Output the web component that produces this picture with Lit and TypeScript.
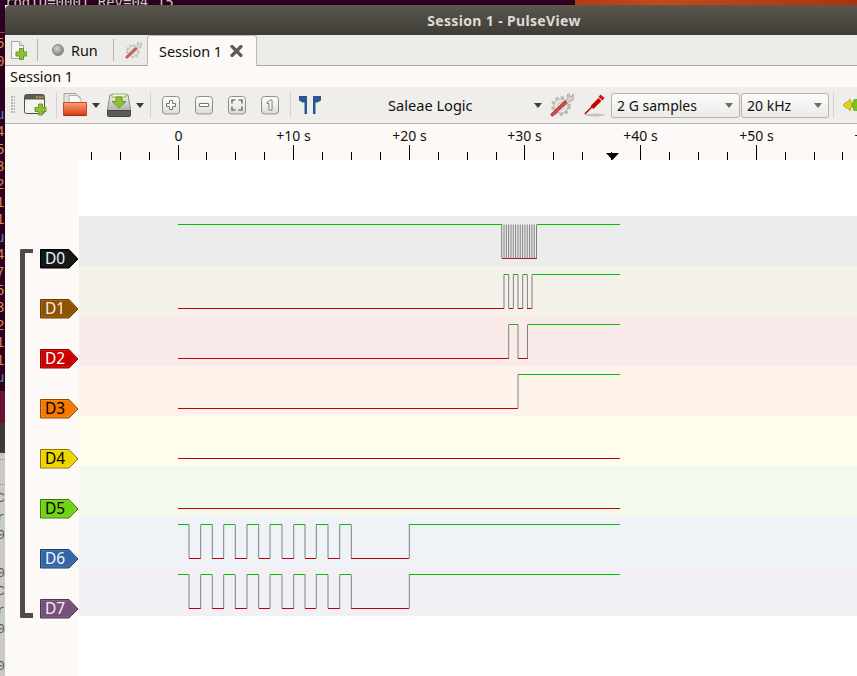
import { LitElement, css, html, svg } from "lit";
import { customElement } from "lit/decorators.js";

const PX_PER_SEC = 11.565;
const T0 = 178;
const END_X = 620;
const HIGH = 8.5;
const LOW = 42.5;

// transitions in screen x, starting level given per channel
const d0Edges = Array.from({ length: 16 }, (_, k) => 501.7 + 2.32 * k);
const pwm = [189, 200.7, 212.3, 223.7, 235.3, 247, 258.7, 270, 282, 293.7, 305, 316.3, 328, 339.7, 351.3, 409.3];

interface Channel {
  name: string;
  bg: string;
  fill: string;
  edge: string;
  ink: string;
  startHigh: boolean;
  edges: number[];
  burst?: boolean;
}

const CHANNELS: Channel[] = [
  { name: "D0", bg: "#ececec", fill: "#16191a", edge: "#000000", ink: "#eef3f8", startHigh: true, edges: d0Edges, burst: true },
  { name: "D1", bg: "#f4f0ea", fill: "#8f5202", edge: "#cf8a2a", ink: "#f4f0ea", startHigh: false, edges: [504, 508.7, 513.4, 518, 522.7, 527.4, 532] },
  { name: "D2", bg: "#fbeaea", fill: "#cc0000", edge: "#ee4444", ink: "#ffffff", startHigh: false, edges: [508.7, 518, 527.5] },
  { name: "D3", bg: "#fef3ea", fill: "#f57900", edge: "#fca64f", ink: "#000000", startHigh: false, edges: [518] },
  { name: "D4", bg: "#fefcea", fill: "#edd400", edge: "#fce94f", ink: "#000000", startHigh: false, edges: [] },
  { name: "D5", bg: "#f3f9ec", fill: "#73d216", edge: "#9ce85a", ink: "#000000", startHigh: false, edges: [] },
  { name: "D6", bg: "#eff2f7", fill: "#3465a4", edge: "#729fcf", ink: "#f2f6fb", startHigh: true, edges: pwm },
  { name: "D7", bg: "#f2f0f4", fill: "#75507b", edge: "#ad7fa8", ink: "#f4eff5", startHigh: true, edges: pwm },
];

const OUTLINES: Record<string, string> = {
  D0: "#000000",
  D1: "#6b3d01",
  D2: "#8f0000",
  D3: "#8f4600",
  D4: "#857700",
  D5: "#3f7508",
  D6: "#1c3f70",
  D7: "#4c3350",
};

const TERM_EDGE = ["_", "5", "0", "", "", "u", "4", "5", "3", "2", "1", "1", "u", "4", "7", "5", "3", "2", "1", "1", "u"];
const TERM_LOWER = ["C", "r", "0", "", "0", "C", "r", "0", "", "0"];

function trace(ch: Channel) {
  const parts = [];
  let level = ch.startHigh;
  let x = T0;
  const points = [...ch.edges, END_X];
  if (ch.burst) {
    // dense edges: the low line runs through, the high line is dropped
    parts.push(svg`<line class="hi" x1=${T0} x2=${ch.edges[0]} y1=${HIGH} y2=${HIGH}></line>`);
    parts.push(svg`<line class="lo" x1=${ch.edges[0]} x2="537" y1=${LOW} y2=${LOW}></line>`);
    parts.push(svg`<line class="hi" x1="537" x2=${END_X} y1=${HIGH} y2=${HIGH}></line>`);
    for (const e of ch.edges) parts.push(svg`<line class="edge" x1=${e} x2=${e} y1=${HIGH} y2=${LOW}></line>`);
    return parts;
  }
  for (const p of points) {
    const y = level ? HIGH : LOW;
    parts.push(svg`<line class=${level ? "hi" : "lo"} x1=${x} x2=${p} y1=${y} y2=${y}></line>`);
    if (p !== END_X) parts.push(svg`<line class="edge" x1=${p} x2=${p} y1=${HIGH} y2=${LOW}></line>`);
    level = !level;
    x = p;
  }
  return parts;
}

function ruler() {
  const parts = [];
  const step = 2.5 * PX_PER_SEC;
  for (let i = -3; i < 34; i++) {
    const x = Math.floor(T0 + i * step) + 0.5;
    const major = i % 4 === 0;
    parts.push(svg`<line class="tick" x1=${x} x2=${x} y1=${major ? 21 : 28} y2="36"></line>`);
    if (major && i >= 0) {
      const sec = i * 2.5;
      parts.push(svg`<text class="tick-label" x=${x} y="17" text-anchor="middle">${sec === 0 ? "0" : `+${sec} s`}</text>`);
    }
  }
  parts.push(svg`<path d="M606 29h13l-6.5 7z" fill="#000"></path>`);
  return parts;
}

const gearIcon = svg`
  <circle cx="11" cy="13" r="8.400" fill="none" stroke="#bcbcb9" stroke-width="3" stroke-dasharray="3.200 2.400"></circle>
  <circle cx="11" cy="13" r="7.200" fill="#e6e6e3" stroke="#adadaa"></circle>
  <circle cx="11" cy="13" r="3.400" fill="#f6f6f4" stroke="#c0c0bd"></circle>
  <path d="M13 10l5-5-.8-3.200 1.800-1.300 1 2.800 2.200.2 1-2.600 1 2.200c.4 2.800-1.800 5.400-4.600 5.200l-4.400 4.600z" fill="#d2d2cf" stroke="#9a9a97" stroke-width=".8"></path>
  <path d="M2.500 21.500L15 9.500" stroke="#a52a2a" stroke-width="3.600" stroke-linecap="round"></path>
  <path d="M2.500 21.500L15 9.500" stroke="#dc4a4a" stroke-width="2.200" stroke-linecap="round"></path>
`;

const plus = (cx: number, cy: number) => svg`
  <path transform="translate(${cx - 6} ${cy - 6})" d="M4 .5h4v3.500h3.500v4h-3.500v3.500h-4v-3.500h-3.500v-4h3.500z" fill="#8fc03a" stroke="#6a9a1f"></path>
`;

const zoomFrame = (inner: unknown) => svg`
  <svg class="zoom" viewBox="0 0 18 19" width="18" height="19">
    <rect x=".5" y=".5" width="17" height="17.500" rx="3" fill="url(#zoomBg)" stroke="#8e8e8a"></rect>
    <path d="M3 18.500h12" stroke="#c4c4c0"></path>
    ${inner}
  </svg>
`;

const defs = svg`
  <defs>
    <linearGradient id="zoomBg" x1="0" y1="0" x2="0" y2="1"><stop offset="0" stop-color="#ffffff"></stop><stop offset="1" stop-color="#dcdbd7"></stop></linearGradient>
    <linearGradient id="folder" x1="0" y1="0" x2="0" y2="1"><stop offset="0" stop-color="#f8a27a"></stop><stop offset="1" stop-color="#dc3a12"></stop></linearGradient>
    <linearGradient id="disk" x1="0" y1="0" x2="0" y2="1"><stop offset="0" stop-color="#f2f2ef"></stop><stop offset="1" stop-color="#a6a6a2"></stop></linearGradient>
    <radialGradient id="led" cx=".4" cy=".35" r=".7"><stop offset="0" stop-color="#d6d6d2"></stop><stop offset="1" stop-color="#777773"></stop></radialGradient>
  </defs>
`;

@customElement("app-root")
export class AppRoot extends LitElement {
  static styles = css`
    :host {
      display: block;
      font-family: "Noto Sans", "Open Sans", sans-serif;
    }
    .desktop {
      position: relative;
      width: 857px;
      height: 676px;
      overflow: hidden;
      background: #2c001e;
    }
    .wallpaper {
      position: absolute;
      left: 575px;
      top: 0;
      right: 0;
      height: 6px;
      background: linear-gradient(90deg, #b43a14, #c24a1c 30%, #a8340f);
    }
    .term-top {
      position: absolute;
      left: 5px;
      top: -6px;
      font: 14px/17px "DejaVu Sans Mono", monospace;
      color: #c9c7bf;
      white-space: pre;
    }
    .strip {
      position: absolute;
      left: 0;
      top: 0;
      width: 5px;
      height: 676px;
      display: flex;
      flex-direction: column;
      overflow: hidden;
    }
    .strip-term {
      flex: none;
      height: 391px;
      box-sizing: border-box;
      padding-top: 18.6px;
      font: 14px/17.6px "Liberation Mono", monospace;
    }
    .strip-term span {
      display: block;
      height: 17.6px;
      margin-left: -4px;
      color: #d98c4c;
    }
    .strip-term span.u {
      color: #5a86c8;
    }
    .strip-wine {
      flex: none;
      height: 32px;
      background: #6a0f35;
    }
    .strip-dark {
      flex: none;
      height: 30px;
      background: #3b3a36;
    }
    .strip-light {
      flex: 1;
      min-height: 0;
      overflow: hidden;
      box-sizing: border-box;
      padding-top: 37px;
      background:
        linear-gradient(#a9a9a7, #a9a9a7) 0 6px / 100% 1px no-repeat,
        linear-gradient(#a9a9a7, #a9a9a7) 0 31px / 100% 1px no-repeat,
        #c9c9c7;
      font: 13px/18.7px "Liberation Mono", monospace;
      color: #55554f;
    }
    .strip-light span {
      display: block;
      height: 18.7px;
      margin-left: -3px;
    }
    .window {
      position: absolute;
      left: 5px;
      top: 5px;
      width: 998px;
      height: 671px;
      display: flex;
      flex-direction: column;
      background: #fdf9f6;
      color: #111;
      font-size: 14.4px;
    }
    .titlebar {
      flex: none;
      height: 30px;
      display: flex;
      align-items: center;
      justify-content: center;
      border-radius: 5px 5px 0 0;
      background: linear-gradient(#5b574e, #3e3c37);
      color: #dfdbd2;
      font-weight: 700;
      font-size: 14px;
      letter-spacing: 0.35px;
    }
    .tabbar {
      flex: none;
      height: 31px;
      box-sizing: border-box;
      display: flex;
      align-items: center;
      padding-left: 6px;
      background: #edebe7;
      border-bottom: 1px solid #aaa8a4;
    }
    .tab-sep {
      width: 1px;
      height: 22px;
      background: #b5b3af;
    }
    .led {
      margin-left: 14px;
    }
    .run {
      margin-left: 7px;
      width: 42px;
    }
    .tab-wrench {
      margin-left: 11px;
    }
    .tab {
      align-self: stretch;
      margin: 0 0 -1px 5px;
      width: 110px;
      box-sizing: border-box;
      display: flex;
      align-items: center;
      padding-left: 11px;
      background: #fdf9f6;
      border: 1px solid #bdbbb7;
      border-bottom: none;
      border-radius: 3px 3px 0 0;
    }
    .tab-close {
      margin-left: 8px;
    }
    .session-label {
      flex: none;
      height: 21px;
      line-height: 21px;
      padding-left: 5px;
    }
    .toolbar {
      flex: none;
      height: 37px;
      box-sizing: border-box;
      display: flex;
      align-items: center;
      padding-left: 6px;
      background: #f0eeeb;
      border-bottom: 1px solid #b8b6b2;
    }
    .toolbar svg {
      flex: none;
      display: block;
    }
    .grip {
      width: 4px;
      height: 18px;
      background-image: radial-gradient(circle at 1px 1px, #b5b3ae 1px, transparent 1px);
      background-size: 3px 3px;
    }
    .tool-sep {
      flex: none;
      width: 1px;
      height: 26px;
      background: #d3d1cd;
    }
    .caret {
      flex: none;
      width: 0;
      height: 0;
      border-left: 4.5px solid transparent;
      border-right: 4.5px solid transparent;
      border-top: 5px solid #3c3c3c;
    }
    .ml1 { margin-left: 1px; }
    .ml4 { margin-left: 4px; }
    .ml5 { margin-left: 5px; }
    .ml6 { margin-left: 6px; }
    .ml7 { margin-left: 7px; }
    .ml8 { margin-left: 8px; }
    .ml9 { margin-left: 9px; }
    .ml10 { margin-left: 10px; }
    .ml11 { margin-left: 11px; }
    .ml15 { margin-left: 15px; }
    .device {
      flex: none;
      width: 154px;
      margin-left: 67px;
      font-size: 14.6px;
      display: flex;
      align-items: center;
      justify-content: space-between;
    }
    .combo {
      flex: none;
      box-sizing: border-box;
      height: 25px;
      display: flex;
      align-items: center;
      justify-content: space-between;
      padding: 0 6px 0 5px;
      border: 1px solid #b3b1ad;
      border-radius: 3px;
      background: linear-gradient(#fbfbfa, #ecebe8);
      font-size: 14px;
    }
    .combo .caret {
      border-top-color: #6c6c68;
    }
    .combo-samples {
      width: 129px;
    }
    .combo-rate {
      width: 88px;
    }
    .ruler {
      flex: none;
      display: block;
      height: 36px;
    }
    .tick {
      stroke: #000;
      stroke-width: 1;
    }
    .tick-label {
      font-size: 14px;
      fill: #111;
    }
    .view {
      flex: 1;
      min-height: 0;
      display: flex;
    }
    .headers {
      flex: none;
      width: 74px;
      display: flex;
    }
    .group {
      flex: none;
      box-sizing: border-box;
      width: 13px;
      height: 369px;
      margin: 89px 0 0 15px;
      border: 5px solid #4d4d48;
      border-right: none;
      border-top-width: 4px;
      border-radius: 2px 0 0 2px;
    }
    .labels {
      flex: none;
      margin: 56px 0 0 7px;
    }
    .label-slot {
      height: 50px;
      box-sizing: border-box;
      padding-top: 33px;
    }
    .label-slot svg {
      display: block;
      overflow: visible;
    }
    .label-slot text {
      font-size: 15.5px;
    }
    .traces {
      flex: 1;
      background: #fff;
      padding-top: 56px;
    }
    .row {
      height: 50px;
    }
    .row svg {
      display: block;
    }
    .hi,
    .lo {
      stroke-width: 1;
      shape-rendering: crispEdges;
    }
    .hi {
      stroke: #00c000;
    }
    .lo {
      stroke: #c00000;
    }
    .edge {
      stroke: #808080;
      stroke-width: 1;
    }
  `;

  render() {
    return html`
      <div class="desktop">
        <div class="strip">
          <div class="strip-term">
            ${TERM_EDGE.map((c) => html`<span class=${c === "u" ? "u" : ""}>${c}</span>`)}
          </div>
          <div class="strip-wine"></div>
          <div class="strip-dark"></div>
          <div class="strip-light">${TERM_LOWER.map((c) => html`<span>${c}</span>`)}</div>
        </div>
        <div class="term-top">rodID=0001 Rev=04.15</div>
        <div class="wallpaper"></div>
        <div class="window">
          <div class="titlebar">Session 1 - PulseView</div>
          ${this.renderTabs()}
          <div class="session-label">Session 1</div>
          ${this.renderToolbar()}
          <svg class="ruler" width="998" height="36" viewBox="5 0 998 36">${ruler()}</svg>
          <div class="view">
            <div class="headers">
              <div class="group"></div>
              <div class="labels">${CHANNELS.map((c) => this.renderLabel(c))}</div>
            </div>
            <div class="traces">
              ${CHANNELS.map(
                (c) => html`
                  <div class="row" style="background:${c.bg}">
                    <svg width="924" height="50" viewBox="79 0 924 50">${trace(c)}</svg>
                  </div>
                `,
              )}
            </div>
          </div>
        </div>
      </div>
    `;
  }

  renderTabs() {
    return html`
      <div class="tabbar">
        <svg width="16" height="19" viewBox="0 0 16 19">
          <path d="M.5.5h8l4 4v13h-12z" fill="#f6f5f2" stroke="#aaaaa5"></path>
          <path d="M8.500.5v4h4" fill="#dddcd8" stroke="#aaaaa5"></path>
          ${plus(10.5, 13)}
        </svg>
        <div class="tab-sep ml10"></div>
        <svg class="led" width="12" height="14" viewBox="0 0 12 14">
          ${defs}
          <circle cx="6" cy="7" r="5.500" fill="url(#led)" stroke="#8c8c88"></circle>
        </svg>
        <span class="run">Run</span>
        <div class="tab-sep"></div>
        <svg class="tab-wrench" width="17" height="17" viewBox="0 0 24 24" opacity=".85">${gearIcon}</svg>
        <div class="tab">
          <span>Session 1</span>
          <svg class="tab-close" width="13" height="12" viewBox="0 0 13 12">
            <path d="M2 1.500l9 9M11 1.500l-9 9" stroke="#5c5c58" stroke-width="3.200" stroke-linecap="round"></path>
          </svg>
        </div>
      </div>
    `;
  }

  renderToolbar() {
    return html`
      <div class="toolbar">
        <svg width="0" height="0">${defs}</svg>
        <div class="grip"></div>
        <svg class="ml9" width="23" height="22" viewBox="0 0 23 22">
          <rect x=".5" y=".5" width="20" height="19" rx="2" fill="#f5f4f1" stroke="#4f4f4b"></rect>
          <path d="M1 1h19v4.500h-19z" fill="#5a5a56"></path>
          <path d="M12 2.500h2v1.500h-2zM15 2.500h2v1.500h-2zM18 2.500h1.500v1.500h-1.500z" fill="#e4a53a"></path>
          ${plus(16.5, 15.5)}
        </svg>
        <div class="tool-sep ml9"></div>
        <svg class="ml6" width="24" height="24" viewBox="0 0 24 24">
          <path d="M1 .5h12l4 4v7h-16z" fill="#e3e2de" stroke="#a5a5a0"></path>
          <path d="M6 2.500h8l4 4v5h-12z" fill="#fbfaf7" stroke="#b0b0ab"></path>
          <path d="M.5 9.500h23v13h-23z" fill="url(#folder)" stroke="#d0482a"></path>
          <path d="M1 22.500h22" stroke="#a82a0d"></path>
        </svg>
        <div class="caret ml5"></div>
        <svg class="ml7" width="24" height="24" viewBox="0 0 24 24">
          <path d="M3 2h18l2.500 14v4h-23v-4z" fill="url(#disk)" stroke="#8c8c88"></path>
          <path d="M.5 17.500h23v5a1 1 0 0 1-1 1h-21a1 1 0 0 1-1-1z" fill="#5b5b57" stroke="#464642"></path>
          <path d="M5 1h14v3h-14z" fill="#f5f5f2" stroke="#7fa82e" stroke-width=".8"></path>
          <path d="M9 4h6v4.500h4l-7 6.500-7-6.500h4z" fill="#8ec03a" stroke="#6a9a1f"></path>
        </svg>
        <div class="caret ml5"></div>
        <div class="tool-sep ml6"></div>
        <span class="ml11">
          ${zoomFrame(svg`<path d="M7.500 4.500h3v3h3v3h-3v3h-3v-3h-3v-3h3z" fill="#fff" stroke="#777773"></path>`)}
        </span>
        <span class="ml15">
          ${zoomFrame(svg`<path d="M4.500 7.500h9v3h-9z" fill="#fff" stroke="#777773"></path>`)}
        </span>
        <span class="ml15">
          ${zoomFrame(svg`<path d="M4 7.500v-3.500h3.500M10.500 4h3.500v3.500M14 10.500v3.500h-3.500M7.500 14h-3.500v-3.500" fill="none" stroke="#777773" stroke-width="1.600"></path>`)}
        </span>
        <span class="ml15">
          ${zoomFrame(svg`<path d="M6 6.500l3.500-2.500h1.500v10h-3v-6.500h-2z" fill="#fff" stroke="#777773"></path>`)}
        </span>
        <div class="tool-sep ml11"></div>
        <svg class="ml8" width="22" height="18" viewBox="0 0 22 18">
          <path d="M0 0h8v18h-2.500v-11.500h-2l-3.500-2z" fill="#2a5694"></path>
          <path d="M22 0h-8v18h2.500v-11.500h2l3.500-2z" fill="#2a5694"></path>
        </svg>
        <div class="device"><span>Saleae Logic</span><div class="caret"></div></div>
        <svg class="ml8" width="24" height="24" viewBox="0 0 24 24">${gearIcon}</svg>
        <svg class="ml10" width="21" height="23" viewBox="0 0 21 23">
          <ellipse cx="11" cy="21" rx="10" ry="1.500" fill="#c4c3bf"></ellipse>
          <path d="M.8 20l8-8" stroke="#b50000" stroke-width="1.400"></path>
          <path d="M8 13.500l8-8" stroke="#c40000" stroke-width="4"></path>
          <path d="M14.500 3l2-2.500 4 3.500-2 2.500z" fill="#d41010"></path>
        </svg>
        <div class="combo combo-samples ml6"><span>2 G samples</span><div class="caret"></div></div>
        <div class="combo combo-rate ml1"><span>20 kHz</span><div class="caret"></div></div>
        <div class="tool-sep ml4"></div>
        <svg class="ml9" width="24" height="14" viewBox="0 0 24 14">
          <path d="M0 7l3-3h2l2-3 2 6-2 6-2-3h-2z" fill="#e4d31a" stroke="#a8970d" stroke-width=".7"></path>
          <path d="M9 7l2-5.500h13v11h-13z" fill="#76c81c" stroke="#5a9a12" stroke-width=".7"></path>
        </svg>
      </div>
    `;
  }

  renderLabel(c: Channel) {
    return html`
      <div class="label-slot">
        <svg width="39" height="20" viewBox="0 0 39 20">
          <path d="M.5.500h28.500l9 9.500-9 9h-28.500z" fill=${c.fill} stroke=${OUTLINES[c.name]}></path>
          <path d="M1.500 1.500h27l8 8.500-8 8h-27z" fill="none" stroke=${c.edge} stroke-opacity=".35"></path>
          <text x="5" y="15" fill=${c.ink}>${c.name}</text>
        </svg>
      </div>
    `;
  }
}
